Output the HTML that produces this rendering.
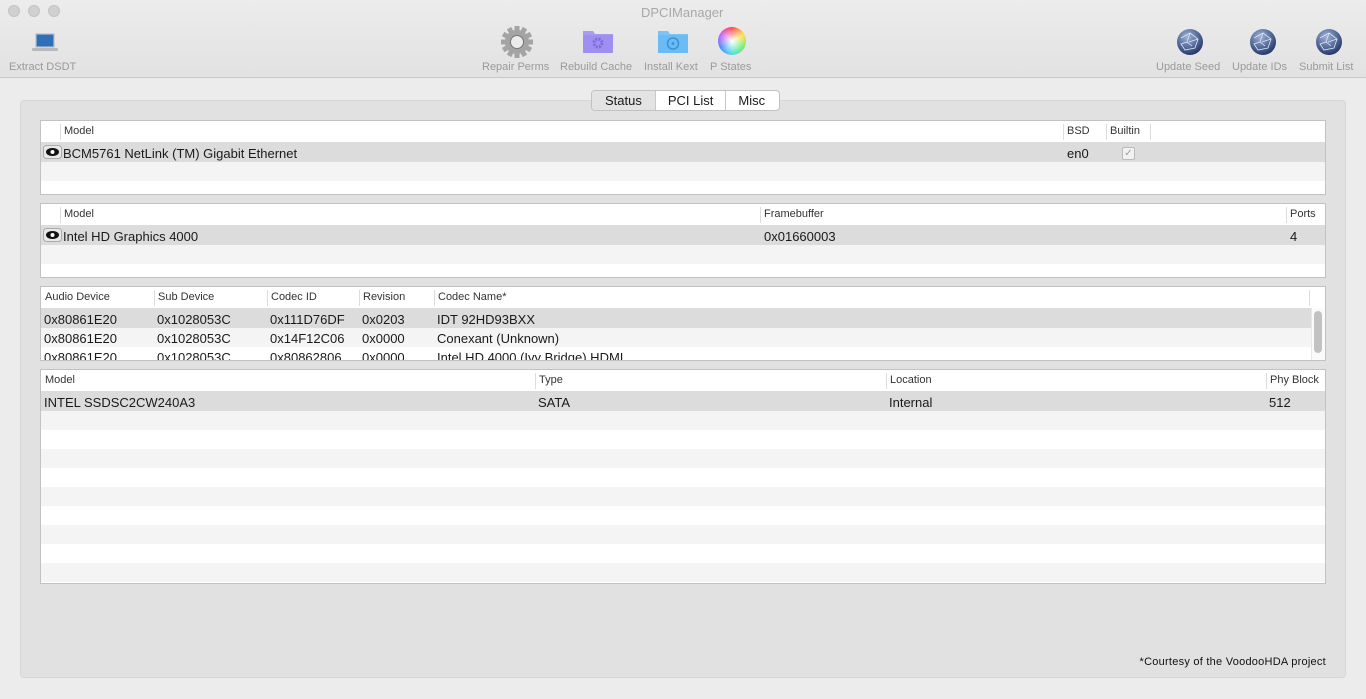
<!DOCTYPE html>
<html><head><meta charset="utf-8"><style>
*{margin:0;padding:0;box-sizing:border-box}
body{width:1366px;height:699px;background:#ececec;font-family:"Liberation Sans",sans-serif;position:relative;overflow:hidden;color:#1a1a1a}
.a{position:absolute}
.tb{left:0;top:0;width:1366px;height:78px;background:linear-gradient(#ececec,#e2e2e2);border-bottom:1px solid #c8c8c8}
.dot{width:12px;height:12px;border-radius:50%;background:#d0d0d0;border:1px solid #c4c4c4;top:5px}
.lbl{font-size:11px;color:#9a9a9a;top:60px;white-space:nowrap}
.panel{left:20px;top:100px;width:1326px;height:578px;background:#e1e1e1;border:1px solid #d6d6d6;border-radius:4px}
.tbl{background:#fff;border:1px solid #c2c2c2;overflow:hidden}
.hd{font-size:11px;color:#333;white-space:nowrap}
.sep{width:1px;background:#dcdcdc;height:16px}
.c{font-size:13px;white-space:nowrap}
.seg{top:90px;height:21px;border:1px solid #c2c2c2;border-radius:4px;background:#fff;font-size:13px;overflow:hidden;display:flex}
.seg div{line-height:19px;padding:0 12px;border-right:1px solid #c8c8c8}
</style></head><body>
<div class="a tb"></div>
<div class="a dot" style="left:8px"></div><div class="a dot" style="left:28px"></div><div class="a dot" style="left:48px"></div>
<div class="a" style="left:641px;top:5px;font-size:13px;color:#a8a8a8">DPCIManager</div>

<svg class="a" style="left:32px;top:32px" width="26" height="20"><rect x="3" y="1" width="20" height="15" rx="1" fill="#cfcfcf"/><rect x="4.5" y="2.5" width="17" height="12" fill="#2f6fb8"/><rect x="0" y="16" width="26" height="3" rx="1" fill="#b9b9b9"/></svg>
<div class="a lbl" style="left:9px;top:61px">Extract DSDT</div>

<svg class="a" style="left:500px;top:25px" width="34" height="34" viewBox="0 0 34 34"><g fill="#a4a4a4"><circle cx="17" cy="17" r="12"/><g id="t"><rect x="14.5" y="1" width="5" height="7"/><rect x="14.5" y="26" width="5" height="7"/></g><use href="#t" transform="rotate(30 17 17)"/><use href="#t" transform="rotate(60 17 17)"/><use href="#t" transform="rotate(90 17 17)"/><use href="#t" transform="rotate(120 17 17)"/><use href="#t" transform="rotate(150 17 17)"/></g><circle cx="17" cy="17" r="6.5" fill="#ececec" stroke="#777" stroke-width="1"/></svg>
<div class="a lbl" style="left:482px;top:61px">Repair Perms</div>

<svg class="a" style="left:582px;top:28px" width="32" height="26"><path d="M1 3h10l2 3h18v19H1z" fill="#a99bf2"/><rect x="1" y="7" width="30" height="18" fill="#9e8ff0"/><circle cx="16" cy="15" r="4" fill="none" stroke="#7d6be0" stroke-width="3" stroke-dasharray="2 1.2"/></svg>
<div class="a lbl" style="left:560px;top:61px">Rebuild Cache</div>

<svg class="a" style="left:657px;top:28px" width="32" height="26"><path d="M1 3h10l2 3h18v19H1z" fill="#7cc4f6"/><rect x="1" y="7" width="30" height="18" fill="#6bbcf4"/><circle cx="16" cy="15.5" r="5.5" fill="none" stroke="#3a94d6" stroke-width="1.6"/><circle cx="16" cy="15.5" r="1.5" fill="#3a94d6"/></svg>
<div class="a lbl" style="left:644px;top:61px">Install Kext</div>

<div class="a" style="left:718px;top:27px;width:28px;height:28px;border-radius:50%;background:radial-gradient(circle,#fff 0,rgba(255,255,255,0) 70%),conic-gradient(#f44,#fd4,#6e6,#4dd,#48f,#c5f,#f44)"></div>
<div class="a lbl" style="left:710px;top:61px">P States</div>

<svg class="a" style="left:1176px;top:28px" width="28" height="28"><defs><radialGradient id="g" cx="40%" cy="30%" r="70%"><stop offset="0" stop-color="#9fb3d9"/><stop offset="1" stop-color="#253a6c"/></radialGradient></defs><circle cx="14" cy="14" r="13" fill="url(#g)"/><path d="M5 10l9-5 8 6-3 9-10 2-4-6 6-2 5 4M14 5l-3 9M22 11l-9 3" stroke="#dfe7f5" stroke-width="0.8" fill="none"/></svg>
<svg class="a" style="left:1249px;top:28px" width="28" height="28"><circle cx="14" cy="14" r="13" fill="url(#g)"/><path d="M5 10l9-5 8 6-3 9-10 2-4-6 6-2 5 4M14 5l-3 9M22 11l-9 3" stroke="#dfe7f5" stroke-width="0.8" fill="none"/></svg>
<svg class="a" style="left:1315px;top:28px" width="28" height="28"><circle cx="14" cy="14" r="13" fill="url(#g)"/><path d="M5 10l9-5 8 6-3 9-10 2-4-6 6-2 5 4M14 5l-3 9M22 11l-9 3" stroke="#dfe7f5" stroke-width="0.8" fill="none"/></svg>
<div class="a lbl" style="left:1156px;top:61px">Update Seed</div>
<div class="a lbl" style="left:1232px;top:61px">Update IDs</div>
<div class="a lbl" style="left:1299px;top:61px">Submit List</div>

<div class="a panel"></div>
<div class="a seg" style="left:591px"><div style="background:#e3e3e3;padding:0 13px">Status</div><div>PCI List</div><div style="border:none;padding:0 14px 0 12px">Misc</div></div>

<!-- T1 -->
<div class="a tbl" style="left:40px;top:120px;width:1286px;height:75px">
<div class="a" style="top:21px;left:0;width:100%;height:20px;background:#dcdcdc"></div>
<div class="a" style="top:41px;left:0;width:100%;height:19px;background:#f4f4f4"></div>
<div class="a sep" style="left:19px;top:3px"></div><div class="a hd" style="left:23px;top:4px">Model</div>
<div class="a sep" style="left:1022px;top:3px"></div><div class="a hd" style="left:1026px;top:4px">BSD</div>
<div class="a sep" style="left:1065px;top:3px"></div><div class="a hd" style="left:1069px;top:4px">Builtin</div>
<div class="a sep" style="left:1109px;top:3px"></div>
<svg class="a" style="left:2px;top:24px" width="19" height="14"><rect x="0.5" y="0.5" width="18" height="13" rx="3" fill="#e8e8e8" stroke="#aaa"/><ellipse cx="9.5" cy="7" rx="6.5" ry="4" fill="#111"/><circle cx="9.5" cy="7" r="2" fill="#fff"/></svg>
<div class="a c" style="left:22px;top:25px">BCM5761 NetLink (TM) Gigabit Ethernet</div>
<div class="a c" style="left:1026px;top:25px">en0</div>
<div class="a" style="left:1081px;top:26px;width:13px;height:13px;border:1px solid #bbb;border-radius:2px;background:#f2f2f2;font-size:10px;color:#999;text-align:center;line-height:11px">✓</div>
</div>

<!-- T2 -->
<div class="a tbl" style="left:40px;top:203px;width:1286px;height:75px">
<div class="a" style="top:21px;left:0;width:100%;height:20px;background:#dcdcdc"></div>
<div class="a" style="top:41px;left:0;width:100%;height:19px;background:#f4f4f4"></div>
<div class="a sep" style="left:19px;top:3px"></div><div class="a hd" style="left:23px;top:4px">Model</div>
<div class="a sep" style="left:719px;top:3px"></div><div class="a hd" style="left:723px;top:4px">Framebuffer</div>
<div class="a sep" style="left:1245px;top:3px"></div><div class="a hd" style="left:1249px;top:4px">Ports</div>
<svg class="a" style="left:2px;top:24px" width="19" height="14"><rect x="0.5" y="0.5" width="18" height="13" rx="3" fill="#e8e8e8" stroke="#aaa"/><ellipse cx="9.5" cy="7" rx="6.5" ry="4" fill="#111"/><circle cx="9.5" cy="7" r="2" fill="#fff"/></svg>
<div class="a c" style="left:22px;top:25px">Intel HD Graphics 4000</div>
<div class="a c" style="left:723px;top:25px">0x01660003</div>
<div class="a c" style="left:1249px;top:25px">4</div>
</div>

<!-- T3 -->
<div class="a tbl" style="left:40px;top:286px;width:1286px;height:75px">
<div class="a" style="top:21px;left:0;width:1270px;height:20px;background:#dcdcdc"></div>
<div class="a" style="top:41px;left:0;width:1270px;height:19px;background:#f4f4f4"></div>
<div class="a hd" style="left:4px;top:4px">Audio Device</div>
<div class="a sep" style="left:113px;top:3px"></div><div class="a hd" style="left:117px;top:4px">Sub Device</div>
<div class="a sep" style="left:226px;top:3px"></div><div class="a hd" style="left:230px;top:4px">Codec ID</div>
<div class="a sep" style="left:318px;top:3px"></div><div class="a hd" style="left:322px;top:4px">Revision</div>
<div class="a sep" style="left:393px;top:3px"></div><div class="a hd" style="left:397px;top:4px">Codec Name*</div>
<div class="a sep" style="left:1268px;top:3px"></div>
<div class="a" style="left:1270px;top:21px;width:15px;height:54px;background:#fafafa;border-left:1px solid #e8e8e8"></div>
<div class="a" style="left:1273px;top:24px;width:8px;height:42px;border-radius:4px;background:#c2c2c2"></div>
<div class="a c" style="left:3px;top:25px">0x80861E20</div><div class="a c" style="left:116px;top:25px">0x1028053C</div><div class="a c" style="left:229px;top:25px">0x111D76DF</div><div class="a c" style="left:321px;top:25px">0x0203</div><div class="a c" style="left:396px;top:25px">IDT 92HD93BXX</div>
<div class="a c" style="left:3px;top:44px">0x80861E20</div><div class="a c" style="left:116px;top:44px">0x1028053C</div><div class="a c" style="left:229px;top:44px">0x14F12C06</div><div class="a c" style="left:321px;top:44px">0x0000</div><div class="a c" style="left:396px;top:44px">Conexant (Unknown)</div>
<div class="a c" style="left:3px;top:63px">0x80861E20</div><div class="a c" style="left:116px;top:63px">0x1028053C</div><div class="a c" style="left:229px;top:63px">0x80862806</div><div class="a c" style="left:321px;top:63px">0x0000</div><div class="a c" style="left:396px;top:63px">Intel HD 4000 (Ivy Bridge) HDMI</div>
</div>

<!-- T4 -->
<div class="a tbl" style="left:40px;top:369px;width:1286px;height:215px">
<div class="a" style="top:0;left:0;width:100%;height:21px;background:#fff"></div>
<div class="a" style="top:21px;left:0;width:100%;height:20px;background:#dcdcdc"></div>
<div class="a" style="top:41px;left:0;width:100%;height:174px;background:repeating-linear-gradient(#f4f4f4 0,#f4f4f4 19px,#fff 19px,#fff 38px)"></div>
<div class="a hd" style="left:4px;top:4px">Model</div>
<div class="a sep" style="left:494px;top:3px"></div><div class="a hd" style="left:498px;top:4px">Type</div>
<div class="a sep" style="left:845px;top:3px"></div><div class="a hd" style="left:849px;top:4px">Location</div>
<div class="a sep" style="left:1225px;top:3px"></div><div class="a hd" style="left:1229px;top:4px">Phy Block</div>
<div class="a c" style="left:3px;top:25px">INTEL SSDSC2CW240A3</div>
<div class="a c" style="left:497px;top:25px">SATA</div>
<div class="a c" style="left:848px;top:25px">Internal</div>
<div class="a c" style="left:1228px;top:25px">512</div>
</div>

<div class="a" style="right:40px;top:656px;font-size:11px;color:#111;letter-spacing:0.25px;white-space:nowrap">*Courtesy of the VoodooHDA project</div>
</body></html>
